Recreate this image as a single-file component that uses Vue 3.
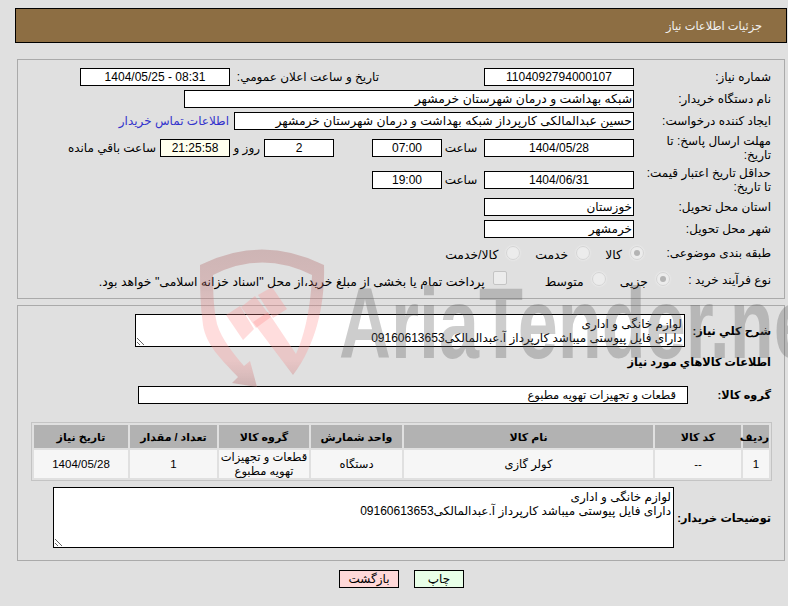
<script setup>
const columns = [
  { title: 'ردیف', width: 26 },
  { title: 'کد کالا', width: 86 },
  { title: 'نام کالا', width: 249 },
  { title: 'واحد شمارش', width: 91 },
  { title: 'گروه کالا', width: 90 },
  { title: 'تعداد / مقدار', width: 87 },
  { title: 'تاریخ نیاز', width: 94 }
]

const rows = [
  ['1', '--', 'کولر گازی', 'دستگاه', 'قطعات و تجهیزات تهویه مطبوع', '1', '1404/05/28']
]

const description = 'لوازم خانگی و اداری\nدارای فایل پیوستی میباشد کارپرداز آ.عبدالمالکی09160613653'
</script>

<template>
  <div class="page" dir="rtl">
    <div class="header">جزئیات اطلاعات نیاز</div>

    <div class="panel panel-info">
      <div class="row">
        <div class="label">شماره نیاز:</div>
        <input class="field center" readonly value="1104092794000107" />
        <div class="label-public">تاریخ و ساعت اعلان عمومي:</div>
        <input class="field center" dir="ltr" readonly value="1404/05/25 - 08:31" />
      </div>
      <div class="row">
        <div class="label">نام دستگاه خریدار:</div>
        <input class="field buyer" readonly value="شبکه بهداشت و درمان شهرستان خرمشهر" />
      </div>
      <div class="row">
        <div class="label">ایجاد کننده درخواست:</div>
        <input class="field creator" readonly value="حسین عبدالمالکی کارپرداز شبکه بهداشت و درمان شهرستان خرمشهر" />
        <a class="contact">اطلاعات تماس خریدار</a>
      </div>
      <div class="row tall">
        <div class="label">مهلت ارسال پاسخ: تا تاریخ:</div>
        <input class="field center" readonly value="1404/05/28" />
        <span class="word hour">ساعت</span>
        <input class="field short center" readonly value="07:00" />
        <input class="field short center days" readonly value="2" />
        <span class="word day">روز و</span>
        <input class="field short center timer" readonly value="21:25:58" />
        <span class="word remain">ساعت باقي مانده</span>
      </div>
      <div class="row tall">
        <div class="label">حداقل تاریخ اعتبار قیمت: تا تاریخ:</div>
        <input class="field center" readonly value="1404/06/31" />
        <span class="word hour">ساعت</span>
        <input class="field short center" readonly value="19:00" />
      </div>
      <div class="row">
        <div class="label">استان محل تحویل:</div>
        <input class="field" readonly value="خوزستان" />
      </div>
      <div class="row">
        <div class="label">شهر محل تحویل:</div>
        <input class="field" readonly value="خرمشهر" />
      </div>
      <div class="row choice-row first-choice">
        <div class="label-choice">طبقه بندی موضوعی:</div>
        <span class="radio checked"></span>
        <span class="choice c-kala">کالا</span>
        <span class="radio"></span>
        <span class="choice c-service">خدمت</span>
        <span class="radio"></span>
        <span class="choice">کالا/خدمت</span>
      </div>
      <div class="row choice-row second-choice">
        <div class="label-process">نوع فرآیند خرید :</div>
        <span class="radio checked"></span>
        <span class="choice c-small">جزیی</span>
        <span class="radio"></span>
        <span class="choice c-medium">متوسط</span>
        <span class="check"></span>
        <span class="choice">پرداخت تمام یا بخشی از مبلغ خرید،از محل "اسناد خزانه اسلامی" خواهد بود.</span>
      </div>
    </div>

    <div class="panel panel-goods">
      <div class="row summary-row">
        <div class="label-bold summary-label">شرح کلي نیاز:</div>
        <textarea class="area summary" readonly :value="description"></textarea>
      </div>
      <div class="section-title">اطلاعات کالاهاي مورد نیاز</div>
      <div class="row group-row">
        <div class="label-bold group-label">گروه کالا:</div>
        <input class="field group" readonly value="قطعات و تجهیزات تهویه مطبوع" />
      </div>

      <table class="goods">
        <colgroup>
          <col v-for="col in columns" :key="col.title" :style="{ width: col.width + 'px' }" />
        </colgroup>
        <thead>
          <tr>
            <th v-for="col in columns" :key="col.title">{{ col.title }}</th>
          </tr>
        </thead>
        <tbody>
          <tr v-for="(row, i) in rows" :key="i">
            <td v-for="(cell, j) in row" :key="j">{{ cell }}</td>
          </tr>
        </tbody>
      </table>

      <div class="row notes-row">
        <div class="label-bold notes-label">توضیحات خریدار:</div>
        <textarea class="area notes" readonly :value="description"></textarea>
      </div>
    </div>

    <div class="actions">
      <button class="btn print">چاپ</button>
      <button class="btn back">بازگشت</button>
    </div>

    <!-- watermark lies over the whole form -->
    <div class="watermark">
      <svg class="shield" width="130" height="140" viewBox="198 248 130 140">
        <defs>
          <linearGradient id="shieldFill" x1="0" y1="0" x2="0" y2="1">
            <stop offset="0" stop-color="#a85a5a" stop-opacity="0.32" />
            <stop offset="0.3" stop-color="#c06a6a" stop-opacity="0.32" />
            <stop offset="0.5" stop-color="#ff8c8c" stop-opacity="0.3" />
            <stop offset="0.8" stop-color="#ff8c8c" stop-opacity="0.3" />
            <stop offset="1" stop-color="#a85a5a" stop-opacity="0.34" />
          </linearGradient>
        </defs>
        <path
          fill="url(#shieldFill)"
          d="M200 265 Q262 234 324 265 C325 300 318 342 293 375 L253 322 L268 312 L296 354 C305 335 311 305 312 275 Q262 250 213 275 C213 295 214 310 217 324 C222 340 234 354 244 366 L250 361 L257 387 L232 383 L238 377 C222 360 206 345 203 325 C200 305 200 285 200 265 Z"
        />
        <path fill="#ff8c8c" fill-opacity="0.3" d="M226 315 L240 306 L254 329 L243 340 Z M241 307 L255 296 L271 317 L256 328 Z M258 295 L272 287 L287 309 L273 318 Z" />
      </svg>
      <div class="wm-text">AriaTender.net</div>
    </div>
  </div>
</template>

<style>
html,
body {
  margin: 0;
  background: #e0e0e0;
}
</style>

<style scoped>
.page {
  position: relative;
  width: 788px;
  height: 606px;
  overflow: hidden;
  background: #e0e0e0;
  color: #000;
  font-family: "Liberation Sans", "DejaVu Sans", sans-serif;
  font-size: 12px;
  line-height: 14px;
  padding-top: 8px;
  box-sizing: border-box;
}

.header {
  margin: 0 1px 0 15px;
  height: 35px;
  line-height: 35px;
  padding-right: 24px;
  box-sizing: border-box;
  background: #8d6e43;
  border: 1px solid #000;
  color: #f2f2f2;
  font-size: 11.4px;
}

.panel {
  margin: 0 3px 0 17px;
  border: 1px solid #aaa;
  box-sizing: border-box;
}

.panel-info {
  margin-top: 16px;
  height: 240px;
  padding: 8px 13px 0 0;
}

.panel-goods {
  margin-top: 6px;
  height: 256px;
  padding: 8px 13px 0 0;
}

.row {
  display: flex;
  align-items: center;
  margin-bottom: 4px;
}

.tall {
  height: 28px;
}

.label {
  width: 137px;
  flex: none;
  padding-left: 8px;
  box-sizing: border-box;
}

.label-public {
  flex: none;
  width: 149px;
  margin-right: 105px;
}

.field {
  width: 150px;
  height: 18px;
  flex: none;
  box-sizing: border-box;
  border: 1px solid #000;
  border-radius: 0;
  background: #fff;
  color: #000;
  font: inherit;
  padding: 0 1px;
  outline: none;
  text-align: right;
}

.center {
  text-align: center;
}

.buyer {
  width: 450px;
  font-size: 12.35px;
}

.creator {
  width: 400px;
  font-size: 12.35px;
}

.contact {
  margin-right: 5px;
  color: #3333cc;
}

.short {
  width: 70px;
}

.word {
  flex: none;
  white-space: nowrap;
}

.hour {
  margin: 0 4px 0 0;
  width: 38px;
  text-align: center;
}

.days {
  margin-right: 38px;
}

.day {
  margin: 0 4px;
  width: 26px;
}

.timer {
  background: #ffffee;
}

.remain {
  margin-right: 4px;
}

.choice-row {
  height: 18px;
}

.first-choice {
  margin-top: 6px;
  margin-bottom: 9px;
}

.label-choice {
  flex: none;
  width: 127px;
}

.label-process {
  flex: none;
  width: 101px;
}

.radio {
  flex: none;
  width: 12px;
  height: 12px;
  border-radius: 50%;
  background: #ececec;
  border: 1px solid #d4d4d4;
  box-shadow: 0 0 2px #f6f6f6;
  position: relative;
}

.second-choice .radio {
  margin-top: -3px;
}

.radio.checked::after {
  content: "";
  position: absolute;
  inset: 3px;
  border-radius: 50%;
  background: #b4b4b4;
}

.check {
  flex: none;
  width: 12px;
  height: 12px;
  margin-top: -5px;
  border: 1px solid #c4c4c4;
  border-radius: 2px;
  background: #ececec;
}

.choice {
  flex: none;
  margin-right: 8px;
  padding-top: 3px;
  font-size: 12.4px;
}

.c-kala {
  margin-left: 15px;
}

.c-service {
  margin-left: 15px;
}

.c-small {
  margin-left: 14px;
}

.c-medium {
  margin-left: 38px;
}

.label-bold,
.section-title {
  font-weight: bold;
  font-size: 11.3px;
  white-space: nowrap;
}

.summary-label {
  flex: none;
  width: 86px;
}

.area {
  display: block;
  box-sizing: border-box;
  flex: none;
  border: 1px solid #000;
  border-radius: 0;
  background: #fff;
  color: #000;
  font: inherit;
  padding: 2px;
  margin: 0;
  outline: none;
}

.summary {
  width: 550px;
  height: 33px;
}

.section-title {
  margin-top: 8px;
}

.group-row {
  margin-top: 17px;
  margin-bottom: 0;
}

.group-label {
  flex: none;
  width: 83px;
}

.group {
  width: 550px;
  padding-right: 11px;
  font-size: 11.5px;
}

.goods {
  width: 741px;
  margin: 18px -1px 0 0;
  border: 1px solid #c4c4c4;
  border-spacing: 2px;
  border-collapse: separate;
  table-layout: fixed;
  background: #e0e0e0;
}

.goods th {
  height: 23px;
  padding: 0;
  background: #b2b2b2;
  font-weight: bold;
  font-size: 11px;
  text-align: center;
  white-space: nowrap;
}

.goods td {
  height: 28px;
  padding: 0;
  box-sizing: border-box;
  background: #f6f6f6;
  font-size: 11.5px;
  text-align: center;
}

.notes-row {
  margin-top: 6px;
  margin-bottom: 0;
}

.notes-label {
  flex: none;
  width: 97px;
}

.notes {
  width: 621px;
  height: 61px;
}

.actions {
  display: flex;
  margin: 9px 324px 0 0;
  gap: 15px;
}

.btn {
  height: 18px;
  padding: 0;
  border: 1px solid #000;
  border-radius: 0;
  color: #000;
  font: inherit;
}

.print {
  width: 50px;
  background: #e8ffe8;
}

.back {
  width: 60px;
  background: #ffd8d8;
}

.watermark {
  position: absolute;
  left: 198px;
  top: 248px;
  width: 590px;
  height: 140px;
  overflow: hidden;
  pointer-events: none;
}

.shield {
  position: absolute;
  left: 0;
  top: 0;
}

.wm-text {
  position: absolute;
  left: 141px;
  top: 25px;
  direction: ltr;
  white-space: nowrap;
  font-family: "Liberation Sans", sans-serif;
  font-weight: bold;
  font-size: 100px;
  line-height: 100px;
  color: rgba(90, 90, 90, 0.3);
  transform-origin: left top;
  transform: scaleX(0.72);
}
</style>
